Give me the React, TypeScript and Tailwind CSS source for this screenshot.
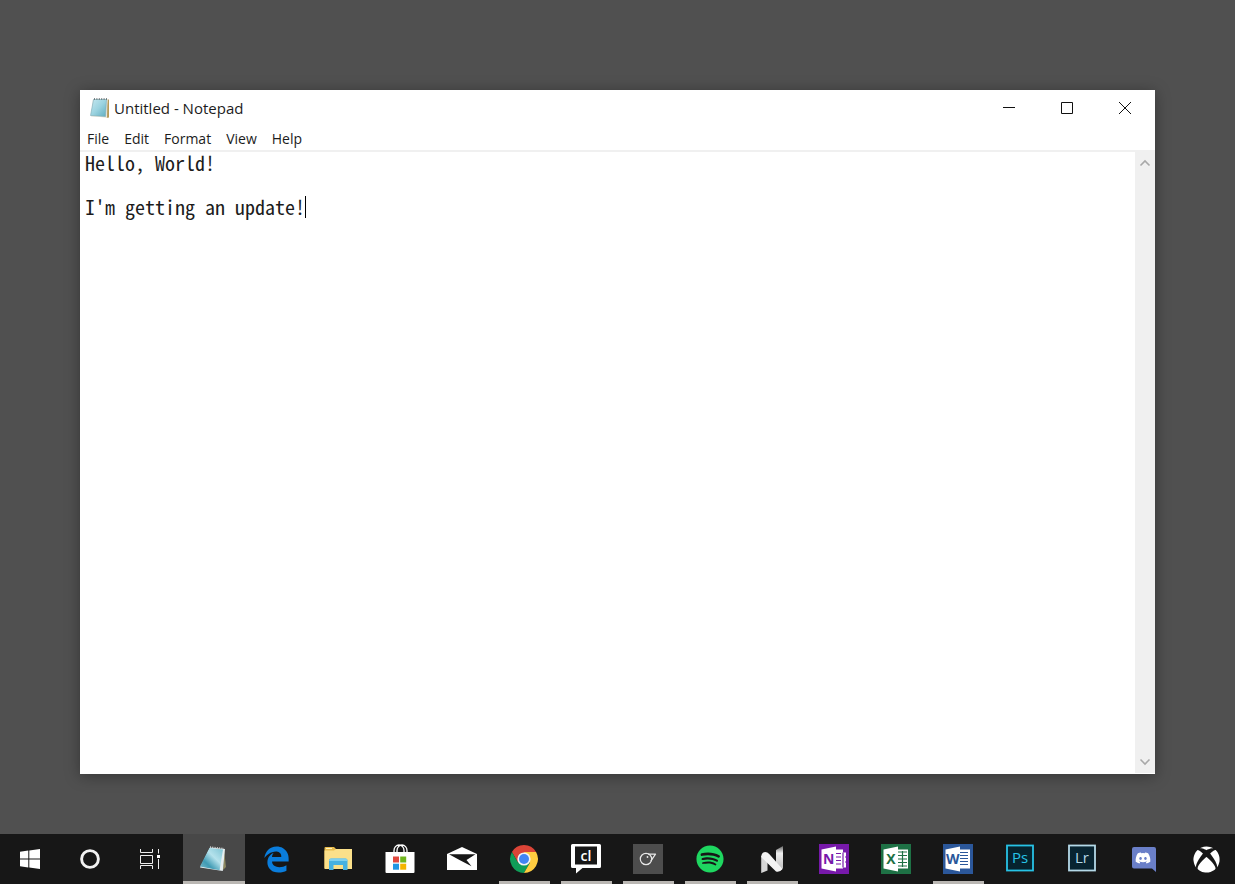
import type { ReactNode } from 'react';
import { FaDiscord, FaEdgeLegacy, FaSpotify, FaXbox } from 'react-icons/fa6';

const MENUS = ['File', 'Edit', 'Format', 'View', 'Help'];
const INITIAL_TEXT = "Hello, World!\n\nI'm getting an update!";

function Icon({ children }: { children: ReactNode }) {
  return (
    <svg viewBox="0 0 32 32" className="size-8" aria-hidden="true">
      {children}
    </svg>
  );
}

function WindowsIcon() {
  return (
    <Icon>
      <path fill="#fff" d="M6 8.7l8.3-1.2v8H6zM15.3 7.4L26 6v9.5H15.3zM6 16.5h8.3v8L6 23.3zM15.3 16.5H26V26l-10.7-1.4z" />
    </Icon>
  );
}

function CortanaIcon() {
  return (
    <Icon>
      <circle cx="16" cy="16" r="8.4" fill="none" stroke="#f2f2f2" strokeWidth="2.9" />
    </Icon>
  );
}

function TaskViewIcon() {
  return (
    <Icon>
      <path
        fill="none"
        stroke="#eee"
        strokeWidth="1"
        d="M6.5 6v3.5h12V6M6.5 12.5h12v8h-12zM6.5 26v-3.5h12V26M24.5 6v4.5M24.5 16v10"
      />
      <path fill="#fff" d="M23 12h3v3h-3z" />
    </Icon>
  );
}

function NotepadTaskIcon() {
  return (
    <Icon>
      <defs>
        <linearGradient id="padTask" x1="0" y1="1" x2="1" y2="0">
          <stop offset="0" stopColor="#7fb9c8" />
          <stop offset="0.3" stopColor="#3f9bb4" />
          <stop offset="0.6" stopColor="#b5e2ec" />
          <stop offset="1" stopColor="#7cc3d3" />
        </linearGradient>
      </defs>
      <path fill="#8f8a62" d="M26 7l2 17-3 3z" />
      <path fill="#e6eef0" d="M12 4.500L27 6l-2.200 22L2 24.600z" />
      <path fill="url(#padTask)" d="M11.500 5L25 6.500l-3.400 20.700L2 23.500z" />
      <path stroke="#ddd" strokeWidth="1.400" strokeDasharray="1 1.300" d="M12 4l14 1.500" />
    </Icon>
  );
}

function NotepadTitleIcon() {
  return (
    <svg viewBox="0 0 20 22" className="h-[22px] w-5" aria-hidden="true">
      <defs>
        <linearGradient id="padTitle" x1="0" y1="0" x2="1" y2="1">
          <stop offset="0" stopColor="#c5e8f0" />
          <stop offset="0.5" stopColor="#9bd3e0" />
          <stop offset="1" stopColor="#5fadc0" />
        </linearGradient>
      </defs>
      <path fill="#b59a5a" d="M17.500 2.500H19v18l-3 .5z" />
      <path fill="#e9e7dc" d="M3 2h14.500L17 21l-7-1-9-.5z" />
      <path fill="url(#padTitle)" d="M3.500 2.500h13L15.500 19.500l-15-1z" />
      <path fill="none" stroke="#7aaab5" strokeWidth=".6" d="M3.500 2.500h13L15.500 19.500l-15-1z" />
      <path stroke="#555f62" strokeWidth="1.600" strokeDasharray="1 1.400" d="M4 2h13" />
    </svg>
  );
}

function FolderIcon() {
  return (
    <Icon>
      <path fill="#e9bd4e" d="M2.500 5a1 1 0 011-1H12l2 2h15a1 1 0 011 1V25H2.500z" />
      <path fill="#fbe08a" d="M2.500 7.500H12L14 6h16v20H2.500z" />
      <path fill="#fff3c0" d="M4 5h6v1H4z" />
      <path fill="#46b1e1" d="M7 17.500q0-2 2-2h14.500q2 0 2 2V27H21v-5h-9.500v5H7z" />
      <path fill="#7fd0ef" d="M7 18q0-2.500 2-2.500h14.500q2 0 2 2.500z" />
    </Icon>
  );
}

function StoreIcon() {
  return (
    <Icon>
      <path fill="none" stroke="#fff" strokeWidth="1.300" d="M10 10V7.500a5 5.500 0 0110 0V10M13 10V7.500a5 5.500 0 0110 0V10" />
      <path fill="#fff" d="M1.500 9h29v20a1 1 0 01-1 1h-27a1 1 0 01-1-1z" />
      <path fill="#e0483e" d="M9 13.500h6v6H9z" />
      <path fill="#6fb51c" d="M16.200 13.500h6v6h-6z" />
      <path fill="#2196e3" d="M9 20.700h6v6H9z" />
      <path fill="#f4b400" d="M16.200 20.700h6v6h-6z" />
    </Icon>
  );
}

function MailIcon() {
  return (
    <Icon>
      <path fill="#fff" d="M1 11L16 4l15 7v16H1z" />
      <path fill="#171717" d="M3 11.200h26.500L20.500 17l5 6.200L13.500 17z" />
    </Icon>
  );
}

function ChromeIcon() {
  return (
    <Icon>
      <path fill="#db4437" d="M3.960 9.050A13.900 13.900 0 0128.040 9.050V13H16l-6.060 6.500z" />
      <path fill="#0f9d58" d="M3.960 9.050A13.900 13.900 0 0016 29.900l6.060-10.400H9.940z" />
      <path fill="#ffcd40" d="M28.040 9.050A13.900 13.900 0 0116 29.900l6.060-10.400L16 9.050z" />
      <circle cx="16" cy="16" r="6.600" fill="#f4f4f4" />
      <circle cx="16" cy="16" r="5" fill="#4285f4" />
    </Icon>
  );
}

function ClIcon() {
  return (
    <Icon>
      <path fill="#fff" d="M2.500 1h27q1.500 0 1.500 1.500v21q0 1.500-1.500 1.500H12.500L6 30.500V25H2.500Q1 25 1 23.500v-21Q1 1 2.500 1z" />
      <path fill="#171717" d="M5 3.500h22v18H5z" />
      <text x="16" y="18" textAnchor="middle" fontSize="14" fontWeight="600" fill="#fff" className="font-['Open_Sans',sans-serif]">
        cl
      </text>
    </Icon>
  );
}

function BirdIcon() {
  return (
    <Icon>
      <path fill="#4d4d4d" d="M1 1h30v30H1z" />
      <circle cx="14" cy="16" r="5.700" fill="none" stroke="#e8e8e8" strokeWidth="1.200" />
      <path fill="none" stroke="#e8e8e8" strokeWidth="1.200" strokeLinejoin="round" d="M16 11.200h7.500l-4.700 7" />
      <circle cx="15.500" cy="14" r=".9" fill="#e8e8e8" />
    </Icon>
  );
}

function NIcon() {
  return (
    <Icon>
      <defs>
        <linearGradient id="nFold" x1="0" y1="0" x2="0" y2="1">
          <stop offset="0" stopColor="#666" />
          <stop offset=".3" stopColor="#eee" />
          <stop offset="1" stopColor="#bbb" />
        </linearGradient>
      </defs>
      <path fill="url(#nFold)" d="M20 7l7-4v22l-1.500 2-5.500-4z" />
      <path fill="#d6d6d6" d="M5.200 13l6.300 1v13.500L5.200 30z" />
      <path fill="#f3f3f3" d="M5.200 13.500q.5-4.500 4-4.500 2.300 0 4 2L26.500 26q-2.500 3.500-6.500 2.500L5.200 14z" />
    </Icon>
  );
}

type OfficeProps = { letter: string; color: string; children: ReactNode };

function OfficeIcon({ letter, color, children }: OfficeProps) {
  return (
    <Icon>
      <path fill={color} d="M1 1h30v30H1z" />
      {children}
      <path fill="#fff" d="M3.500 6.500L18 3.500v25L3.500 25.500z" />
      <text x="10.800" y="21" textAnchor="middle" fontSize="14" fontWeight="700" fill={color} className="font-['Open_Sans',sans-serif]">
        {letter}
      </text>
    </Icon>
  );
}

function OneNoteIcon() {
  return (
    <OfficeIcon letter="N" color="#7719aa">
      <path fill="#fff" d="M17 6.500h8v3h3v4h-1v1h1v4h-1v1h1v5h-3v1h-8z" />
      <path stroke="#7719aa" strokeWidth="1.200" d="M18 10.500h5M18 14h5M18 17.500h5M18 21h5M25 9.500v15" />
    </OfficeIcon>
  );
}

function ExcelIcon() {
  return (
    <OfficeIcon letter="X" color="#1e7145">
      <path fill="#fff" d="M17 6.500h11v19H17z" />
      <path stroke="#1e7145" strokeWidth="1.200" d="M18 9h9M18 12.500h9M18 16h9M18 19.500h9M18 23h9M22.500 8v16" />
    </OfficeIcon>
  );
}

function WordIcon() {
  return (
    <OfficeIcon letter="W" color="#2b579a">
      <path fill="#fff" d="M17 6.500h11v19H17z" />
      <path stroke="#2b579a" strokeWidth="1.200" d="M18 9.500h8M18 12.500h8M18 15.500h8M18 18.500h8M18 21.500h8" />
    </OfficeIcon>
  );
}

function AdobeIcon({ label, color, fill }: { label: string; color: string; fill: string }) {
  return (
    <Icon>
      <rect x="3" y="2.500" width="26" height="25" fill={fill} stroke={color} strokeWidth="1.800" />
      <text x="16" y="20" textAnchor="middle" fontSize="15" fontWeight="500" fill={color} className="font-['Open_Sans',sans-serif]">
        {label}
      </text>
    </Icon>
  );
}

function DiscordTile() {
  return (
    <Icon>
      <path fill="#6a7fc8" d="M6 4h20q2 0 2 2v23l-4-3.500H6q-2 0-2-2V6q0-2 2-2z" />
      <FaDiscord x="7" y="7" width="18" height="16" color="#fff" />
    </Icon>
  );
}

type Task = { name: string; icon: ReactNode; running?: boolean; active?: boolean };

const SYSTEM: Task[] = [
  { name: 'Start', icon: <WindowsIcon /> },
  { name: 'Cortana', icon: <CortanaIcon /> },
  { name: 'Task View', icon: <TaskViewIcon /> },
];

const TASKS: Task[] = [
  { name: 'Notepad', icon: <NotepadTaskIcon />, active: true },
  { name: 'Edge', icon: <FaEdgeLegacy size={27} color="#0a7ddc" /> },
  { name: 'File Explorer', icon: <FolderIcon /> },
  { name: 'Store', icon: <StoreIcon /> },
  { name: 'Mail', icon: <MailIcon /> },
  { name: 'Chrome', icon: <ChromeIcon />, running: true },
  { name: 'cl', icon: <ClIcon />, running: true },
  { name: 'Bird', icon: <BirdIcon />, running: true },
  { name: 'Spotify', icon: <FaSpotify size={28} color="#1ed760" />, running: true },
  { name: 'N', icon: <NIcon />, running: true },
  { name: 'OneNote', icon: <OneNoteIcon /> },
  { name: 'Excel', icon: <ExcelIcon /> },
  { name: 'Word', icon: <WordIcon />, running: true },
  { name: 'Photoshop', icon: <AdobeIcon label="Ps" color="#27c3e6" fill="#06232e" /> },
  { name: 'Lightroom', icon: <AdobeIcon label="Lr" color="#b4d9e8" fill="#082431" /> },
  { name: 'Discord', icon: <DiscordTile /> },
  { name: 'Xbox', icon: <FaXbox size={27} color="#fff" /> },
];

function TaskButton({ task }: { task: Task }) {
  return (
    <button
      type="button"
      aria-label={task.name}
      className={`relative flex h-full w-[62px] shrink-0 items-center justify-center ${task.active ? 'bg-[#484848]' : ''}`}
    >
      {task.icon}
      {task.active && <span className="absolute inset-x-0 bottom-0 h-[3px] bg-[#bab7b3]" />}
      {task.running && <span className="absolute right-[5px] bottom-0 left-[6px] h-[3px] bg-[#bab7b3]" />}
    </button>
  );
}

function Taskbar() {
  return (
    <nav aria-label="Taskbar" className="flex h-[50px] overflow-hidden bg-[#171717]">
      <div className="flex pr-[3px]">
        {SYSTEM.map((task) => (
          <button key={task.name} type="button" aria-label={task.name} className="flex w-[60px] items-center justify-center">
            {task.icon}
          </button>
        ))}
      </div>
      {TASKS.map((task) => (
        <TaskButton key={task.name} task={task} />
      ))}
    </nav>
  );
}

function WindowControl({ name, path }: { name: string; path: string }) {
  return (
    <button type="button" aria-label={name} className="flex w-[58px] items-center justify-center">
      <svg viewBox="0 0 14 14" className="size-[14px]" fill="none" stroke="#111" aria-hidden="true">
        <path d={path} />
      </svg>
    </button>
  );
}

function ScrollButton({ name, path }: { name: string; path: string }) {
  return (
    <button type="button" aria-label={name} className="flex h-[22px] w-full items-center justify-center">
      <svg viewBox="0 0 12 8" className="h-2 w-3" fill="none" stroke="#a8a8a8" strokeWidth="1.600" aria-hidden="true">
        <path d={path} />
      </svg>
    </button>
  );
}

function NotepadWindow() {
  return (
    <section aria-label="Notepad" className="flex flex-1 flex-col bg-white font-['Open_Sans',sans-serif] text-[#1c1c1c] shadow-[0_2px_14px_rgba(0,0,0,0.35)]">
      <header className="flex h-9 items-stretch justify-between pl-[10px]">
        <h1 className="flex items-center gap-1 text-[15px]">
          <NotepadTitleIcon />
          Untitled - Notepad
        </h1>
        <div className="flex pr-px">
          <WindowControl name="Minimize" path="M1 6.500h12" />
          <WindowControl name="Maximize" path="M1.500 1.500h11v11h-11z" />
          <WindowControl name="Close" path="M1 1l12 12M13 1L1 13" />
        </div>
      </header>
      <div className="flex h-[26px] items-end gap-[15px] border-b-2 border-[#f0f0f0] px-[7px] text-sm">
        {MENUS.map((menu) => (
          <button key={menu} type="button" className="leading-[22px]">
            {menu}
          </button>
        ))}
      </div>
      <div className="flex flex-1">
        <div className="relative ml-[5px] flex flex-1 font-['Noto_Sans_Mono_CJK_SC','DejaVu_Sans_Mono',monospace] text-[20px] leading-[22px]">
          <textarea
            aria-label="Document text"
            defaultValue={INITIAL_TEXT}
            spellCheck={false}
            className="flex-1 resize-none outline-none"
          />
          <span className="absolute top-11 left-[22ch] h-[22px] w-px bg-black" />
        </div>
        <div className="mb-px flex w-5 flex-col justify-between bg-[#f0f0f0]">
          <ScrollButton name="Scroll up" path="M1.500 6.500L6 2l4.500 4.500" />
          <ScrollButton name="Scroll down" path="M1.500 1.500L6 6l4.500-4.500" />
        </div>
      </div>
    </section>
  );
}

export default function App() {
  return (
    <div className="flex min-h-screen flex-col bg-[#505050]">
      <main className="flex flex-1 flex-col px-20 pt-[90px] pb-[60px]">
        <NotepadWindow />
      </main>
      <Taskbar />
    </div>
  );
}
